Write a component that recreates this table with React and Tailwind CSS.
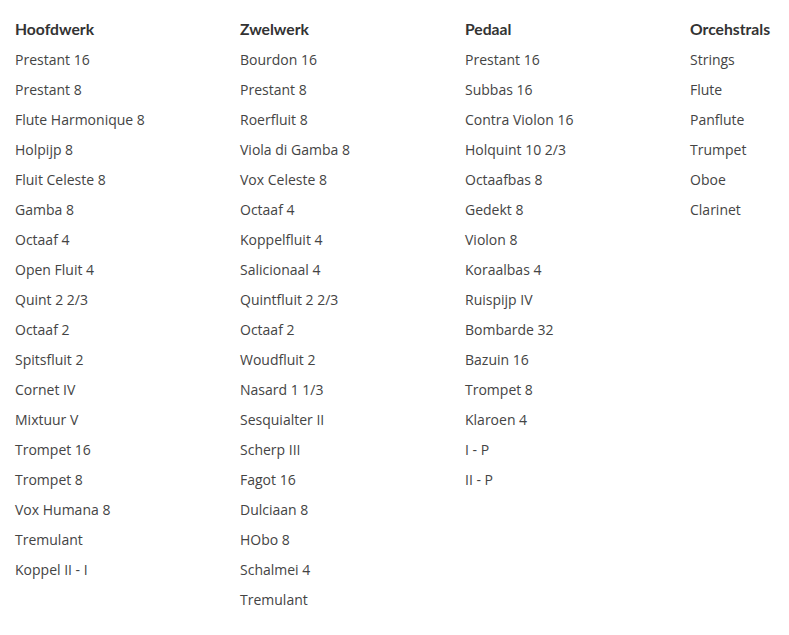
import React from 'react';

const columns = [
  {
    title: 'Hoofdwerk',
    items: ['Prestant 16', 'Prestant 8', 'Flute Harmonique 8', 'Holpijp 8', 'Fluit Celeste 8', 'Gamba 8', 'Octaaf 4', 'Open Fluit 4', 'Quint 2 2/3', 'Octaaf 2', 'Spitsfluit 2', 'Cornet IV', 'Mixtuur V', 'Trompet 16', 'Trompet 8', 'Vox Humana 8', 'Tremulant', 'Koppel II - I'],
  },
  {
    title: 'Zwelwerk',
    items: ['Bourdon 16', 'Prestant 8', 'Roerfluit 8', 'Viola di Gamba 8', 'Vox Celeste 8', 'Octaaf 4', 'Koppelfluit 4', 'Salicionaal 4', 'Quintfluit 2 2/3', 'Octaaf 2', 'Woudfluit 2', 'Nasard 1 1/3', 'Sesquialter II', 'Scherp III', 'Fagot 16', 'Dulciaan 8', 'HObo 8', 'Schalmei 4', 'Tremulant'],
  },
  {
    title: 'Pedaal',
    items: ['Prestant 16', 'Subbas 16', 'Contra Violon 16', 'Holquint 10 2/3', 'Octaafbas 8', 'Gedekt 8', 'Violon 8', 'Koraalbas 4', 'Ruispijp IV', 'Bombarde 32', 'Bazuin 16', 'Trompet 8', 'Klaroen 4', 'I - P', 'II - P'],
  },
  {
    title: 'Orcehstrals',
    items: ['Strings', 'Flute', 'Panflute', 'Trumpet', 'Oboe', 'Clarinet'],
  },
];

export default function App() {
  return (
    <div className="bg-white min-h-[635px] pt-[15px] pl-[15px]">
      <div className="grid grid-cols-[225px_225px_225px_1fr]">
        {columns.map((col) => (
          <div key={col.title}>
            {/* heading sits 1px above the row centre */}
            <h3 className="h-[30px] font-['Lato',sans-serif] font-bold text-[15.7px] leading-[28px] text-[#333333]">{col.title}</h3>
            <ul>
              {col.items.map((item, i) => (
                <li key={i} className="font-['Open_Sans',sans-serif] text-[14px] leading-[30px] text-[#444444]">
                  {item}
                </li>
              ))}
            </ul>
          </div>
        ))}
      </div>
    </div>
  );
}
